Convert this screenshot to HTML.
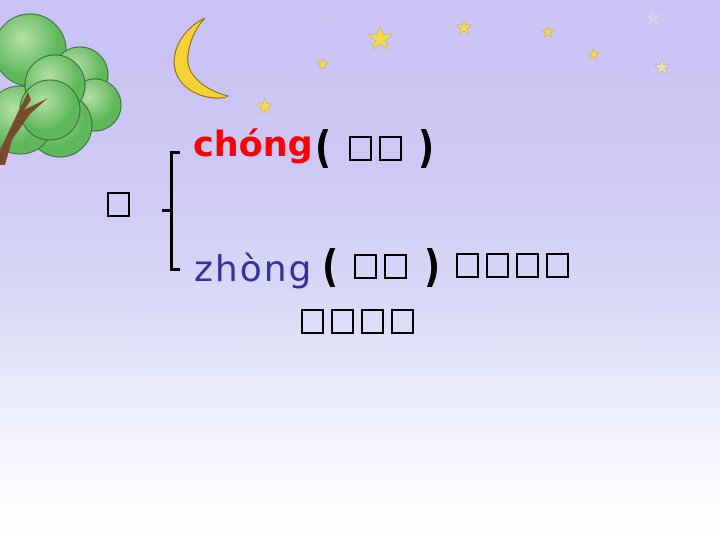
<!DOCTYPE html>
<html><head><meta charset="utf-8"><style>
body{margin:0}
#p{position:relative;width:720px;height:540px;overflow:hidden;
background:linear-gradient(180deg,#c9c2f3 0%,#cdc8f5 30%,#d9d8f7 55%,#ecedfb 75%,#fbfbff 92%,#fff 100%);
font-family:"DejaVu Sans","Liberation Sans","Noto Sans CJK SC",sans-serif}
.a{position:absolute;white-space:nowrap;line-height:1}
.pr{position:absolute;line-height:1;font-size:44px;font-weight:bold;transform:scaleX(0.8)}
.b{position:absolute;width:19px;height:21px;border:2px solid #000;color:transparent;font-size:12px;overflow:hidden}
.s{position:absolute;color:#f3d84a;font-size:20px;line-height:1;text-shadow:0 0 1px #8a6a10}
</style></head><body><div id="p">
<svg style="position:absolute;left:0;top:0" width="720" height="170">
<defs><radialGradient id="g" cx="0.4" cy="0.35"><stop offset="0" stop-color="#b5e0a8"/><stop offset="1" stop-color="#5fb85a"/></radialGradient></defs>
<g stroke="#3d6b3d" stroke-width="1" fill="url(#g)">
<circle cx="30" cy="50" r="36"/><circle cx="80" cy="75" r="28"/><circle cx="95" cy="105" r="26"/><circle cx="60" cy="125" r="32"/><circle cx="20" cy="120" r="34"/><circle cx="55" cy="85" r="30"/><circle cx="50" cy="110" r="30"/></g>
<path d="M0 150 L18 112 L28 92 L31 100 L24 110 L48 98 L30 114 L12 140 L5 165 L0 165 Z" fill="#7a4a2a"/>
<path d="M205 18 C170 35 160 80 200 95 C215 100 225 98 228 96 C205 90 185 75 188 55 C190 38 198 25 205 18Z" fill="#f7d234" stroke="#8a6a10" stroke-width="1"/>
</svg>
<div class="s" style="left:366px;top:22px;font-size:32px">★</div>
<div class="s" style="left:256px;top:96px">★</div>
<div class="s" style="left:316px;top:57px;font-size:15px">★</div>
<div class="s" style="left:455px;top:17px">★</div>
<div class="s" style="left:541px;top:25px;font-size:15px">★</div>
<div class="s" style="left:587px;top:47px;font-size:15px">★</div>
<div class="s" style="left:653px;top:57px;color:#e8e0b0">★</div>
<div class="s" style="left:643px;top:8px;color:#d8d0e8;font-size:22px;text-shadow:none">★</div>
<div class="s" style="left:324px;top:14px;font-size:13px;color:#d8c8d0;text-shadow:none">★</div>

<div class="a" style="left:193px;top:128px;font-size:35px;font-weight:bold;color:#f00">chóng</div>
<div class="pr" style="left:313px;top:126px">(</div>
<div class="b" style="left:349px;top:136px">重</div><div class="b" style="left:379px;top:136px">复</div>
<div class="pr" style="left:416px;top:126px">)</div>

<div class="b" style="left:107px;top:192px">重</div>
<div style="position:absolute;left:170px;top:151px;width:3px;height:120px;background:#000"></div>
<div style="position:absolute;left:170px;top:151px;width:10px;height:3px;background:#000"></div>
<div style="position:absolute;left:170px;top:268px;width:10px;height:3px;background:#000"></div>
<div style="position:absolute;left:162px;top:209px;width:10px;height:3px;background:#000"></div>

<div class="a" style="left:194px;top:252px;font-size:36px;letter-spacing:2px;color:#333399">zhòng</div>
<div class="pr" style="left:320px;top:245px">(</div>
<div class="b" style="left:354px;top:254px">重</div><div class="b" style="left:384px;top:254px">量</div>
<div class="pr" style="left:422px;top:245px">)</div>
<div class="b" style="left:456px;top:253px">重</div><div class="b" style="left:486px;top:253px">于</div><div class="b" style="left:516px;top:253px">泰</div><div class="b" style="left:546px;top:253px">山</div>
<div class="b" style="left:301px;top:309px">举</div><div class="b" style="left:331px;top:309px">足</div><div class="b" style="left:361px;top:309px">轻</div><div class="b" style="left:391px;top:309px">重</div>
</div></body></html>
